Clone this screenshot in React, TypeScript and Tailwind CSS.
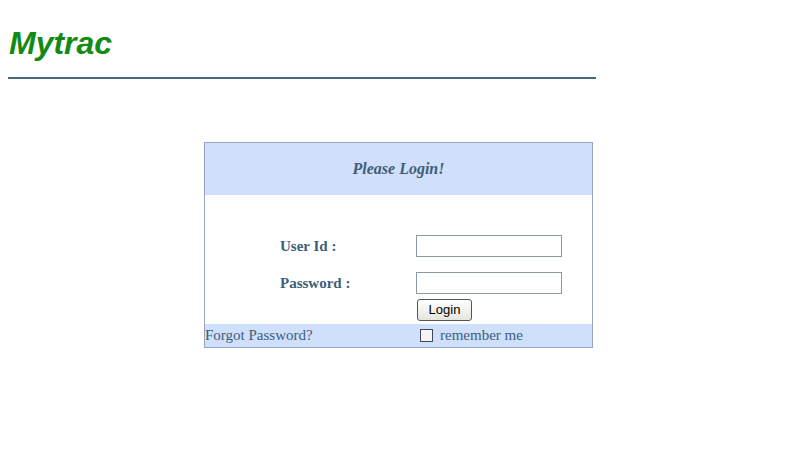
export default function App() {
  return (
    <div className="min-h-[466px] bg-white pt-[25px] pl-[8px]">
      <h1 className="pl-px text-[32px] leading-[36px] font-bold italic text-[#138a13] [font-family:'Liberation_Sans',Arial,sans-serif]">
        Mytrac
      </h1>
      <div className="mt-[16px] h-[2px] w-[588px] bg-[#466878]" />

      <div className="mt-[63px] ml-[196px] w-[389px] border border-[#98a4c4] [font-family:'Liberation_Serif','Times_New_Roman',serif] text-[#3e5e78]">
        <div className="flex h-[52px] items-center justify-center bg-[#d0dffb] text-[16px] font-bold italic">
          Please Login!
        </div>
        <div className="pt-[40px] pb-[3px]">
          <div className="flex h-[22px] items-center">
            <span className="w-[211px] pl-[75px] text-[15px] font-bold">User Id :</span>
            <input className="h-[22px] w-[146px] border border-[#8a9aa8] bg-white" />
          </div>
          <div className="mt-[15px] flex h-[22px] items-center">
            <span className="w-[211px] pl-[75px] text-[15px] font-bold">Password :</span>
            <input type="password" className="h-[22px] w-[146px] border border-[#8a9aa8] bg-white" />
          </div>
          <div className="mt-[5px] flex">
            <div className="w-[211px]" />
            <button className="ml-px h-[22px] w-[55px] rounded-[3px] border border-[#555] bg-gradient-to-b from-white to-[#e6e6e0] text-[13px] text-black [font-family:'Liberation_Sans',Arial,sans-serif]">
              Login
            </button>
          </div>
        </div>
        <div className="flex h-[23px] items-center bg-[#d0dffb] text-[15px]">
          <span className="w-[211px]">Forgot Password?</span>
          <span className="flex items-center">
            <span className="ml-[4px] mr-[7px] h-[13px] w-[13px] border border-[#3a4a5a] bg-[#f4f4f4]" />
            remember me
          </span>
        </div>
      </div>
    </div>
  );
}
